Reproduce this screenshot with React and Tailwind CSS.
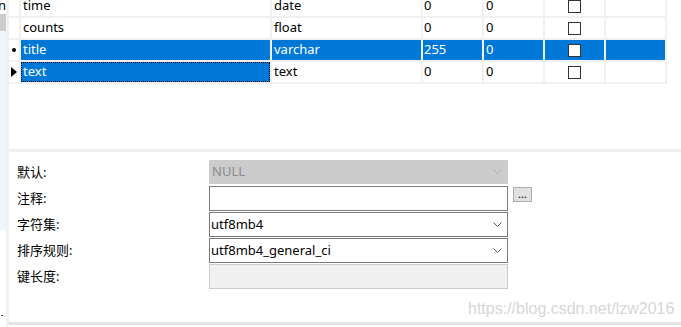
import React from 'react';

const font = { fontFamily: '"Noto Sans", "Noto Sans CJK SC", sans-serif' };

const rows = [
  { name: 'time', type: 'date', len: '0', dec: '0' },
  { name: 'counts', type: 'float', len: '0', dec: '0' },
  { name: 'title', type: 'varchar', len: '255', dec: '0', selected: true },
  { name: 'text', type: 'text', len: '0', dec: '0', focused: true },
];

function Chevron({ light }) {
  return (
    <svg width="9" height="6" viewBox="0 0 9 6" className="shrink-0">
      <polyline points="0.5,0.5 4.5,4.5 8.5,0.5" fill="none" stroke={light ? '#b0b0b0' : '#5a5a5a'} strokeWidth="1" />
    </svg>
  );
}

function Checkbox() {
  return <div className="w-[13px] h-[13px] border border-[#333333] bg-white" />;
}

function Row({ r }) {
  const sel = r.selected;
  const cell = 'h-[22px] border-r-2 border-b-2 border-[#f0f0f0] flex items-center text-[13px]';
  const fill = sel ? 'bg-[#0078d7] text-white' : 'bg-white text-black';
  return (
    <div className="flex">
      <div className={`${cell} w-[12px] bg-white justify-center`}>
        {sel && <div className="w-[4px] h-[4px] rounded-full bg-black" />}
        {r.focused && (
          <svg width="6" height="10" viewBox="0 0 6 10"><polygon points="0,0 6,5 0,10" fill="#000" /></svg>
        )}
      </div>
      <div className={`${cell} w-[251px] ${r.focused ? 'bg-[#0078d7] text-white' : fill}`}>
        {r.focused ? (
          <div className="w-full h-full border border-dotted border-[#ff8c00] outline outline-1 outline-dotted outline-black -outline-offset-1 flex items-center pl-[1px]">
            {r.name}
          </div>
        ) : (
          <span className="pl-[2px]">{r.name}</span>
        )}
      </div>
      <div className={`${cell} w-[151px] ${fill}`}><span className="pl-[2px]">{r.type}</span></div>
      <div className={`${cell} w-[61px] ${fill}`}><span className="pl-[1px]">{r.len}</span></div>
      <div className={`${cell} w-[61px] ${fill}`}><span className="pl-[2px]">{r.dec}</span></div>
      <div className={`${cell} w-[61px] ${fill} justify-center`}><Checkbox /></div>
      <div className={`${cell} w-[61px] ${fill}`} />
    </div>
  );
}

function Field({ label, children }) {
  return (
    <div className="flex h-[26px] items-start">
      <div className="w-[200px] pl-[8px] h-[25px] flex items-center text-[13px] text-black">{label}</div>
      {children}
    </div>
  );
}

export default function App() {
  return (
    <div className="w-[681px] h-[327px] flex overflow-hidden bg-white" style={font}>
      {/* left tree strip */}
      <div className="w-[6px] flex flex-col shrink-0">
        <div className="h-[14px] bg-white overflow-hidden text-[13px] leading-[10px] text-black">
          <span className="block -ml-[2px]">n</span>
        </div>
        <div className="h-[17px] bg-[#cccccc]" />
        <div className="h-[199px] bg-[#eef5fd]" />
        <div className="flex-1 bg-white relative">
          <div className="absolute left-[1px] top-[85px] w-[2px] h-[1px] bg-[#555]" />
        </div>
      </div>
      <div className="w-[3px] bg-[#f0f0f0] shrink-0" />

      {/* main */}
      <div className="flex-1 flex flex-col">
        <div className="h-[149px] overflow-hidden">
          <div className="-mt-[4px]">
            {rows.map((r) => <Row key={r.name} r={r} />)}
          </div>
        </div>
        <div className="h-[3px] bg-[#f0f0f0]" />
        <div className="flex-1 relative pt-[8px]">
          <Field label="默认:">
            <div className="w-[299px] h-[24px] bg-[#cccccc] flex items-center justify-between pl-[3px] pr-[6px] text-[13px] text-[#8a8a8a]">
              NULL <Chevron light />
            </div>
          </Field>
          <Field label="注释:">
            <div className="w-[299px] h-[25px] bg-white border border-[#7a7a7a]" />
            <div className="ml-[5px] mt-[1px] w-[19px] h-[15px] bg-[#e1e1e1] border border-[#adadad] flex items-center justify-center text-[11px] leading-none text-black pb-[3px]">
              ...
            </div>
          </Field>
          <Field label="字符集:">
            <div className="w-[299px] h-[25px] bg-white border border-[#7a7a7a] flex items-center justify-between pl-[1px] pr-[5px] text-[13px] text-black">
              utf8mb4 <Chevron />
            </div>
          </Field>
          <Field label="排序规则:">
            <div className="w-[299px] h-[25px] bg-white border border-[#7a7a7a] flex items-center justify-between pl-[1px] pr-[5px] text-[13px] text-black">
              utf8mb4_general_ci <Chevron />
            </div>
          </Field>
          <Field label="键长度:">
            <div className="w-[299px] h-[25px] bg-[#f0f0f0] border border-[#cccccc]" />
          </Field>
          <div
            className="absolute left-[459px] top-[145px] text-[16px] text-[#d6d6d6]"
            style={{ fontFamily: '"Liberation Sans", Arial, sans-serif' }}
          >
            https://blog.csdn.net/lzw2016
          </div>
        </div>
        <div className="h-[3px] bg-[#e3e3e3]" />
        <div className="h-[2px] bg-white" />
      </div>
    </div>
  );
}
